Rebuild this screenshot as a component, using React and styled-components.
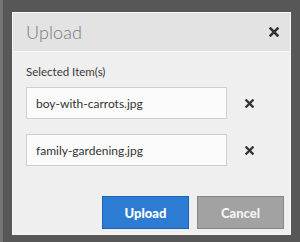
import React from "react";
import styled, { createGlobalStyle } from "styled-components";

const Global = createGlobalStyle`
  html, body { margin: 0; padding: 0; background: #585858; }
  body { font-family: Lato, "Open Sans", sans-serif; }
`;

const Backdrop = styled.div`
  width: 300px;
  height: 242px;
  box-sizing: border-box;
  background: #575757;
  border-left: 3px solid #747474;
  padding: 12px 9px 7px 9px;
`;

const Dialog = styled.div`
  width: 279px;
  height: 223px;
  box-sizing: border-box;
  background: #efefef;
  border: 1px solid #f6f6f6;
  display: flex;
  flex-direction: column;
`;

const Header = styled.div`
  height: 38px;
  flex: none;
  background: #e3e3e3;
  border-bottom: 1px solid #f7f7f7;
  display: flex;
  align-items: center;
  justify-content: space-between;
  padding: 0 11px 0 13px;
`;

const Title = styled.h2`
  margin: 0;
  font-family: Lato, sans-serif;
  font-weight: 300;
  font-size: 18px;
  color: #7a7a7a;
  letter-spacing: 0.1px;
`;

const Body = styled.div`
  flex: 1;
  display: flex;
  flex-direction: column;
  padding: 12px 0 0 13px;
`;

const Label = styled.div`
  font-size: 11.5px;
  line-height: 16px;
  color: #3a3a3a;
  margin-bottom: 7px;
`;

const Rows = styled.div`
  display: flex;
  flex-direction: column;
  gap: 15px;
`;

const Row = styled.div`
  display: flex;
  align-items: center;
  gap: 18px;
`;

const FileField = styled.div`
  width: 201px;
  height: 32px;
  box-sizing: border-box;
  border: 1px solid #cfcfcf;
  background: #fbfbfb;
  display: flex;
  align-items: center;
  padding-left: 9px;
  font-size: 12px;
  color: #333;
`;

const IconButton = styled.button`
  border: 0;
  padding: 0;
  background: none;
  width: ${(p) => p.size}px;
  height: ${(p) => p.size}px;
  display: flex;
  align-items: center;
  justify-content: center;
  cursor: pointer;
`;

const Footer = styled.div`
  margin-top: auto;
  display: flex;
  justify-content: flex-end;
  gap: 8px;
  padding: 0 6px 5px 0;
`;

const Button = styled.button`
  width: 87px;
  height: 33px;
  box-sizing: border-box;
  border: 1px solid ${(p) => (p.primary ? "#1d63b3" : "#878787")};
  background: ${(p) => (p.primary ? "#2d7cd3" : "#a2a2a2")};
  color: ${(p) => (p.primary ? "#ffffff" : "#f4f4f4")};
  font-family: Lato, sans-serif;
  font-weight: 900;
  font-size: 13px;
  cursor: pointer;
`;

const Cross = ({ size = 9 }) => (
  <svg width={size} height={size} viewBox="0 0 10 10">
    <path d="M1.5 1.5 L8.5 8.5 M8.5 1.5 L1.5 8.5" stroke="#333" strokeWidth="2.5" strokeLinecap="square" />
  </svg>
);

const files = ["boy-with-carrots.jpg", "family-gardening.jpg"];

export default function App() {
  return (
    <>
      <Global />
      <Backdrop>
        <Dialog>
          <Header>
            <Title>Upload</Title>
            <IconButton size={10} aria-label="Close">
              <Cross size={10} />
            </IconButton>
          </Header>
          <Body>
            <Label>Selected Item(s)</Label>
            <Rows>
              {files.map((f) => (
                <Row key={f}>
                  <FileField>{f}</FileField>
                  <IconButton size={9} aria-label="Remove">
                    <Cross size={9} />
                  </IconButton>
                </Row>
              ))}
            </Rows>
            <Footer>
              <Button primary>Upload</Button>
              <Button>Cancel</Button>
            </Footer>
          </Body>
        </Dialog>
      </Backdrop>
    </>
  );
}
